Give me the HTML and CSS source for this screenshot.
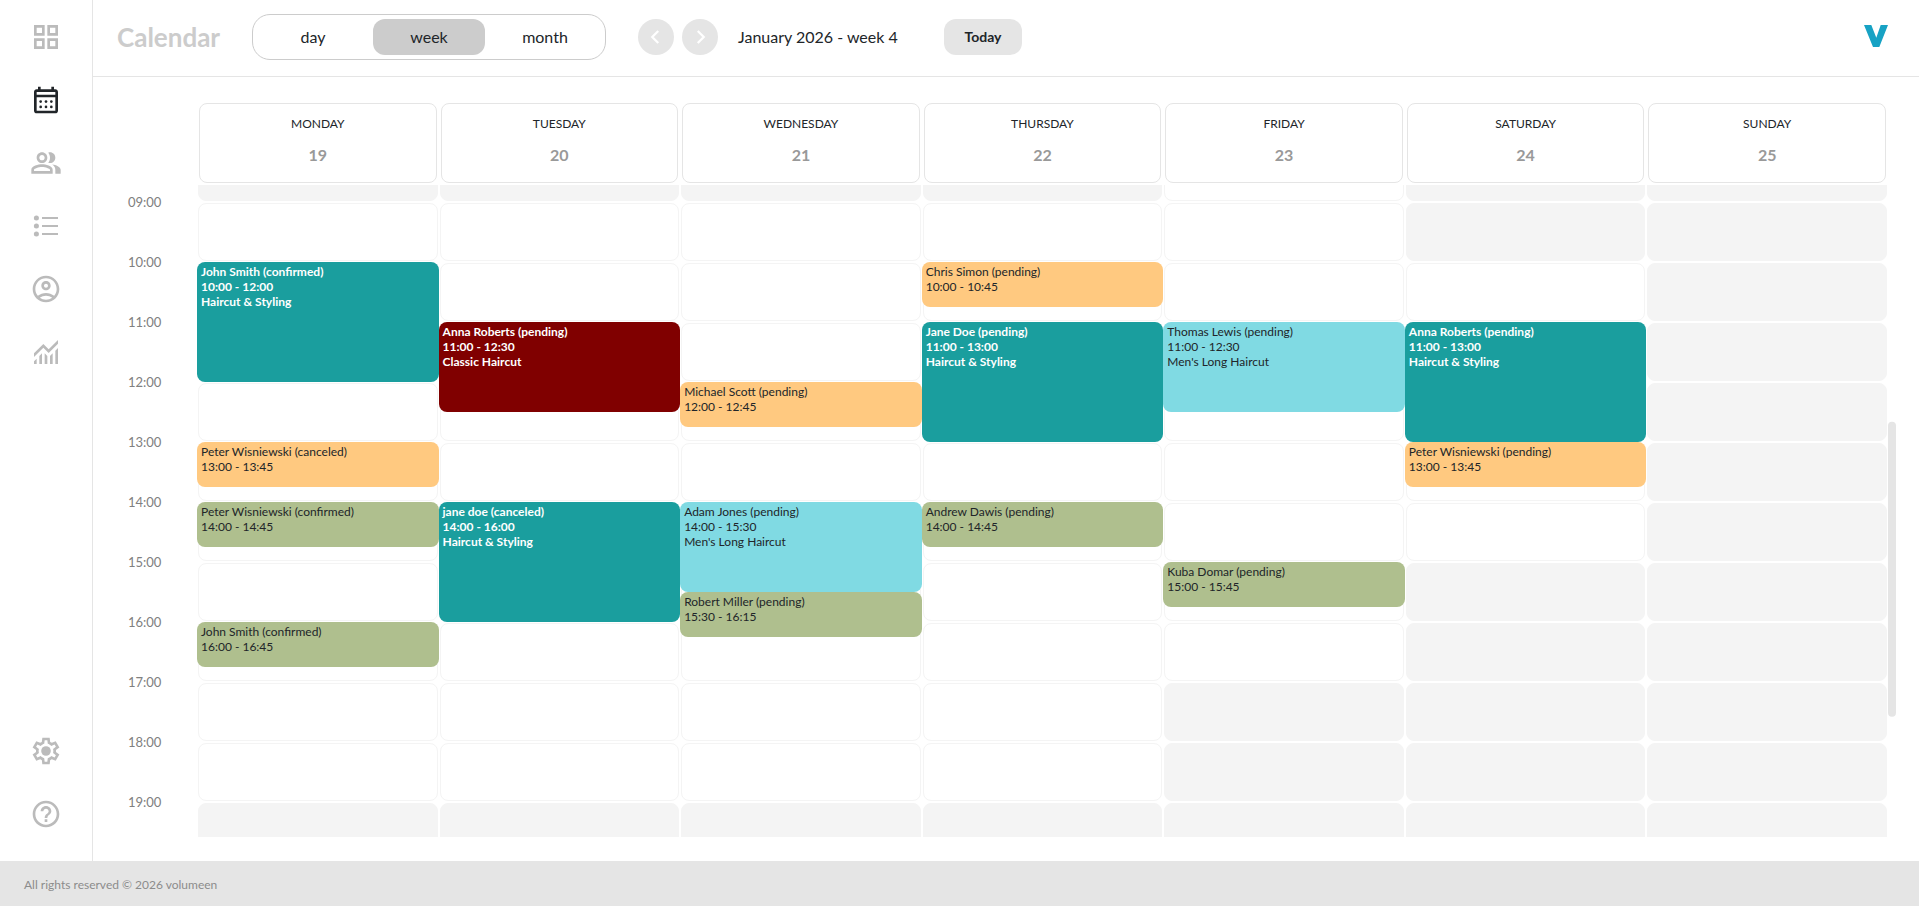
FILE: index.html
```html
<!DOCTYPE html>
<html lang="en">
<head>
<meta charset="utf-8">
<title>Calendar</title>
<link rel="stylesheet" href="styles.css">
</head>
<body>
<div class="app">
  <nav class="sidebar" aria-label="Main">
    <a href="#" class="nav-link" aria-label="Dashboard"><svg viewBox="0 0 24 24"><path d="M3 3v8h8V3H3zm6 6H5V5h4v4zm-6 4v8h8v-8H3zm6 6H5v-4h4v4zm4-16v8h8V3h-8zm6 6h-4V5h4v4zm-6 4v8h8v-8h-8zm6 6h-4v-4h4v4z"/></svg></a>
    <a href="#" class="nav-link active" aria-label="Calendar" aria-current="page"><svg viewBox="0 0 24 24"><path d="M19 4h-1V2h-2v2H8V2H6v2H5c-1.1 0-2 .9-2 2v14c0 1.1.9 2 2 2h14c1.1 0 2-.9 2-2V6c0-1.1-.9-2-2-2zm0 16H5V10h14v10zm0-12H5V6h14v2z"/><circle cx="8" cy="13.200" r="1"/><circle cx="12" cy="13.200" r="1"/><circle cx="16" cy="13.200" r="1"/><circle cx="8" cy="17.200" r="1"/><circle cx="12" cy="17.200" r="1"/><circle cx="16" cy="17.200" r="1"/></svg></a>
    <a href="#" class="nav-link" aria-label="Clients"><svg viewBox="0 0 24 24"><path d="M16.670 13.130C18.040 14.060 19 15.320 19 17v3h4v-3c0-2.180-3.570-3.470-6.330-3.870zM15 12c2.210 0 4-1.790 4-4s-1.790-4-4-4c-.47 0-.91.1-1.330.24C14.500 5.270 15 6.580 15 8s-.5 2.730-1.330 3.760c.42.14.86.24 1.330.24zM9 12c2.210 0 4-1.790 4-4s-1.790-4-4-4-4 1.790-4 4 1.790 4 4 4zm0-6c1.100 0 2 .9 2 2s-.9 2-2 2-2-.9-2-2 .9-2 2-2zm0 7c-2.670 0-8 1.340-8 4v3h16v-3c0-2.660-5.330-4-8-4zm6 5H3v-.99C3.200 16.290 6.300 15 9 15s5.800 1.290 6 2v1z"/></svg></a>
    <a href="#" class="nav-link" aria-label="Services"><svg viewBox="0 0 24 24"><circle cx="4.800" cy="6" r="1.900"/><circle cx="4.800" cy="12" r="1.900"/><circle cx="4.800" cy="18" r="1.900"/><path d="M9 5.200h12v1.600H9zM9 11.200h12v1.600H9zM9 17.200h12v1.600H9z"/></svg></a>
    <a href="#" class="nav-link" aria-label="Account"><svg viewBox="0 0 24 24"><path d="M12 2C6.480 2 2 6.480 2 12s4.480 10 10 10 10-4.480 10-10S17.520 2 12 2zM7.350 18.500C8.660 17.560 10.260 17 12 17s3.340.56 4.650 1.500C15.340 19.440 13.740 20 12 20s-3.340-.56-4.650-1.500zm10.790-1.380C16.450 15.800 14.320 15 12 15s-4.450.8-6.140 2.120C4.700 15.730 4 13.950 4 12c0-4.420 3.580-8 8-8s8 3.580 8 8c0 1.950-.7 3.730-1.860 5.120z"/><path d="M12 6c-1.930 0-3.500 1.570-3.500 3.500S10.070 13 12 13s3.500-1.570 3.500-3.500S13.930 6 12 6zm0 5c-.83 0-1.500-.67-1.500-1.500S11.170 8 12 8s1.500.67 1.500 1.500S12.830 11 12 11z"/></svg></a>
    <a href="#" class="nav-link" aria-label="Statistics"><svg viewBox="0 -960 960 960"><path d="M120-120v-80l80-80v160h-80Zm160 0v-240l80-80v320h-80Zm160 0v-320l80 81v239h-80Zm160 0v-239l80-80v319h-80Zm160 0v-400l80-80v480h-80ZM120-327v-113l280-280 160 160 280-280v113L560-447 400-607 120-327Z"/></svg></a>
    <a href="#" class="nav-link nav-bottom" aria-label="Settings"><svg viewBox="0 0 24 24"><path d="M9.250 22l-.4-3.200q-.33-.12-.61-.3-.29-.17-.56-.37L4.700 19.380 1.950 14.630l2.580-1.960q-.03-.17-.03-.34v-.67q0-.16.030-.34L1.950 9.370 4.700 4.620 7.680 5.870q.27-.2.570-.37.300-.18.600-.3L9.250 2h5.500l.4 3.200q.33.120.61.300.290.170.560.370l2.980-1.250 2.750 4.750-2.580 1.950q.030.180.030.340v.67q0 .17-.05.340l2.580 1.960-2.750 4.750-2.960-1.250q-.28.200-.58.370-.29.180-.59.300L14.750 22zM11 20h1.980l.35-2.650q.77-.2 1.440-.59.660-.39 1.210-.93l2.470 1.020.98-1.700-2.150-1.620q.12-.36.170-.74.050-.39.050-.79t-.05-.79q-.05-.39-.17-.74l2.150-1.620-.98-1.700-2.470 1.050q-.55-.58-1.210-.96-.67-.39-1.440-.59L13 4h-1.980l-.35 2.650q-.77.200-1.440.59-.66.390-1.210.93L5.550 7.150l-.98 1.700 2.150 1.600q-.12.370-.17.750-.05.370-.05.800 0 .4.050.770.050.380.170.750l-2.150 1.630.98 1.700 2.470-1.050q.55.580 1.210.96.670.390 1.440.59z"/><circle cx="12" cy="12" r="3.600"/></svg></a>
    <a href="#" class="nav-link" aria-label="Help"><svg viewBox="0 0 24 24"><path d="M11 18h2v-2h-2v2zm1-16C6.480 2 2 6.480 2 12s4.480 10 10 10 10-4.480 10-10S17.520 2 12 2zm0 18c-4.410 0-8-3.590-8-8s3.590-8 8-8 8 3.590 8 8-3.590 8-8 8zm0-14c-2.210 0-4 1.790-4 4h2c0-1.100.9-2 2-2s2 .9 2 2c0 2-3 1.750-3 5h2c0-2.250 3-2.500 3-5 0-2.210-1.790-4-4-4z"/></svg></a>
  </nav>

  <div class="content">
    <header class="topbar">
      <h1 class="title">Calendar</h1>
      <div class="views" role="group" aria-label="View">
        <button type="button" class="view">day</button>
        <button type="button" class="view selected" aria-pressed="true">week</button>
        <button type="button" class="view">month</button>
      </div>
      <div class="pager">
        <button type="button" class="arrow" aria-label="Previous week"><svg viewBox="0 0 24 24"><path d="M15 4l-8 8 8 8"/></svg></button>
        <button type="button" class="arrow" aria-label="Next week"><svg viewBox="0 0 24 24"><path d="M9 4l8 8-8 8"/></svg></button>
      </div>
      <span class="period">January 2026 - week 4</span>
      <button type="button" class="today">Today</button>
      <a href="#" class="logo" aria-label="volumeen"><svg viewBox="0 0 40 40"><path d="M8 8h7.300l5 12.700L24.700 8H32l-8.700 22H17z"/></svg></a>
    </header>

    <main class="calendar">
      <div class="days">
        <div class="day-head"><span>MONDAY</span><strong>19</strong></div>
        <div class="day-head"><span>TUESDAY</span><strong>20</strong></div>
        <div class="day-head"><span>WEDNESDAY</span><strong>21</strong></div>
        <div class="day-head"><span>THURSDAY</span><strong>22</strong></div>
        <div class="day-head"><span>FRIDAY</span><strong>23</strong></div>
        <div class="day-head"><span>SATURDAY</span><strong>24</strong></div>
        <div class="day-head"><span>SUNDAY</span><strong>25</strong></div>
      </div>
      <div class="week">
        <div class="hours" id="hours">
          <div class="times">
            <span>09:00</span>
            <span>10:00</span>
            <span>11:00</span>
            <span>12:00</span>
            <span>13:00</span>
            <span>14:00</span>
            <span>15:00</span>
            <span>16:00</span>
            <span>17:00</span>
            <span>18:00</span>
            <span>19:00</span>
          </div>
          <div class="day" data-open="9" data-close="19">
            <div class="event teal" style="grid-row: 41 / 49">John Smith (confirmed)<br>10:00 - 12:00<br>Haircut &amp; Styling</div>
            <div class="event orange" style="grid-row: 53 / 56">Peter Wisniewski (canceled)<br>13:00 - 13:45</div>
            <div class="event green" style="grid-row: 57 / 60">Peter Wisniewski (confirmed)<br>14:00 - 14:45</div>
            <div class="event green" style="grid-row: 65 / 68">John Smith (confirmed)<br>16:00 - 16:45</div>
          </div>
          <div class="day" data-open="9" data-close="19">
            <div class="event maroon" style="grid-row: 45 / 51">Anna Roberts (pending)<br>11:00 - 12:30<br>Classic Haircut</div>
            <div class="event teal" style="grid-row: 57 / 65">jane doe (canceled)<br>14:00 - 16:00<br>Haircut &amp; Styling</div>
          </div>
          <div class="day" data-open="9" data-close="19">
            <div class="event orange" style="grid-row: 49 / 52">Michael Scott (pending)<br>12:00 - 12:45</div>
            <div class="event sky" style="grid-row: 57 / 63">Adam Jones (pending)<br>14:00 - 15:30<br>Men's Long Haircut</div>
            <div class="event green" style="grid-row: 63 / 66">Robert Miller (pending)<br>15:30 - 16:15</div>
          </div>
          <div class="day" data-open="9" data-close="19">
            <div class="event orange" style="grid-row: 41 / 44">Chris Simon (pending)<br>10:00 - 10:45</div>
            <div class="event teal" style="grid-row: 45 / 53">Jane Doe (pending)<br>11:00 - 13:00<br>Haircut &amp; Styling</div>
            <div class="event green" style="grid-row: 57 / 60">Andrew Dawis (pending)<br>14:00 - 14:45</div>
          </div>
          <div class="day" data-open="8" data-close="17">
            <div class="event sky" style="grid-row: 45 / 51">Thomas Lewis (pending)<br>11:00 - 12:30<br>Men's Long Haircut</div>
            <div class="event green" style="grid-row: 61 / 64">Kuba Domar (pending)<br>15:00 - 15:45</div>
          </div>
          <div class="day" data-open="10" data-close="15">
            <div class="event teal" style="grid-row: 45 / 53">Anna Roberts (pending)<br>11:00 - 13:00<br>Haircut &amp; Styling</div>
            <div class="event orange" style="grid-row: 53 / 56">Peter Wisniewski (pending)<br>13:00 - 13:45</div>
          </div>
          <div class="day" data-open="0" data-close="0"></div>
        </div>
        <div class="track"><div class="thumb" id="thumb"></div></div>
      </div>
    </main>
  </div>
</div>
<footer class="footer">All rights reserved © 2026 volumeen</footer>
<script src="calendar.js"></script>
</body>
</html>
```
FILE: styles.css
```css
* { box-sizing: border-box; }
body {
  margin: 0;
  height: 100vh;
  display: flex;
  flex-direction: column;
  background: #fff;
  color: #212529;
  font-family: Lato, "Open Sans", sans-serif;
  font-size: 16px;
}
button { font: inherit; color: inherit; border: 0; padding: 0; cursor: pointer; }
.app { flex: 1; min-height: 0; display: flex; }

.sidebar {
  flex: none;
  width: 93px;
  border-right: 1px solid #e5e5e5;
  padding: 21px 0 31px;
  display: flex;
  flex-direction: column;
  align-items: center;
  gap: 31px;
}
.nav-link { height: 32px; color: #bbb; }
.nav-link svg { display: block; width: 32px; height: 32px; fill: currentColor; }
.nav-link.active { color: #212529; }
.nav-bottom { margin-top: auto; }

.content { flex: 1; min-width: 0; display: flex; flex-direction: column; }
.topbar {
  flex: none;
  height: 77px;
  padding: 0 23px 3px 24px;
  border-bottom: 1px solid #e5e5e5;
  display: flex;
  align-items: center;
}
.title { margin: 0; width: 135px; font-size: 26px; font-weight: 700; color: #ccc; }
.views {
  display: flex;
  gap: 4px;
  padding: 4px;
  border: 1px solid #ccc;
  border-radius: 18px;
}
.view { width: 112px; height: 36px; border-radius: 12px; background: none; }
.view.selected { background: #ccc; }
.pager { display: flex; gap: 8px; margin: 0 20px 0 32px; }
.arrow {
  width: 36px;
  height: 36px;
  border-radius: 50%;
  background: #e5e5e5;
  display: grid;
  place-items: center;
}
.arrow svg { width: 18px; height: 18px; fill: none; stroke: #fff; stroke-width: 3; }
.period { width: 206px; white-space: nowrap; }
.today { width: 78px; height: 36px; border-radius: 12px; background: #e5e5e5; font-size: 14px; font-weight: 700; }
.logo { margin-left: auto; width: 40px; height: 40px; border-radius: 50%; }
.logo svg { display: block; fill: #17a2c4; }

.calendar {
  flex: 1;
  min-height: 0;
  padding: 24px 23px 24px 24px;
  display: flex;
  flex-direction: column;
}
.days {
  flex: none;
  display: grid;
  grid-template-columns: repeat(7, 1fr);
  padding: 0 8px 0 80px;
}
.day-head {
  margin: 2px;
  height: 80px;
  padding-top: 11px;
  border: 1px solid #e5e5e5;
  border-radius: 8px;
  display: flex;
  flex-direction: column;
  align-items: center;
  gap: 12px;
  font-size: 12px;
  line-height: 18px;
}
.day-head strong { font-size: 16px; line-height: 20px; color: #999; }
.week { flex: 1; min-height: 0; display: flex; }
.hours {
  flex: 1;
  min-width: 0;
  overflow-y: scroll;
  scrollbar-width: none;
  display: grid;
  grid-template-columns: 80px repeat(7, 1fr);
}
.track { flex: none; width: 8px; }
.thumb { border-radius: 4px; background: #e5e5e5; }
/* Labels start at 09:00, nine hour rows down, centred on the hour line. */
.times {
  display: flex;
  flex-direction: column;
  padding: 532px 0 0 11px;
  font-size: 13px;
  line-height: 16px;
  color: #808080;
}
.times span { flex: none; height: 60px; }
.day { display: grid; grid-template-rows: repeat(96, 15px); grid-template-columns: 100%; }
.cell { grid-column: 1; margin: 1px; border: 1px solid #f4f4f4; border-radius: 8px; }
.cell.closed { background: #f4f4f4; }
.event {
  grid-column: 1;
  z-index: 1;
  border-radius: 8px;
  padding: 2px 4px;
  font-size: 12px;
  line-height: 15px;
  overflow: hidden;
}
.teal { background: #1a9e9e; color: #fff; font-weight: 700; }
.maroon { background: #800000; color: #fff; font-weight: 700; }
.orange { background: #ffc980; }
.green { background: #afbf8e; }
.sky { background: #80dae3; }

.footer {
  flex: none;
  height: 45px;
  padding: 0 24px;
  background: #e5e5e5;
  color: #8c8c8c;
  font-size: 12px;
  line-height: 48px;
}
```
FILE: calendar.js
```javascript
const hours = document.getElementById('hours');
const thumb = document.getElementById('thumb');

// One cell per hour behind the events of each day.
document.querySelectorAll('.day').forEach((day) => {
  const open = Number(day.dataset.open);
  const close = Number(day.dataset.close);
  for (let h = 23; h >= 0; h--) {
    const cell = document.createElement('div');
    cell.className = h >= open && h < close ? 'cell' : 'cell closed';
    cell.style.gridRow = `${h * 4 + 1} / span 4`;
    day.prepend(cell);
  }
});

// Keeps the slim scrollbar in step with the hours pane.
function updateThumb() {
  const ratio = hours.clientHeight / hours.scrollHeight;
  thumb.style.height = `${hours.clientHeight * ratio}px`;
  thumb.style.transform = `translateY(${hours.scrollTop * ratio}px)`;
}

hours.addEventListener('scroll', updateThumb);
window.addEventListener('resize', updateThumb);
hours.scrollTop = 523;
updateThumb();
```
